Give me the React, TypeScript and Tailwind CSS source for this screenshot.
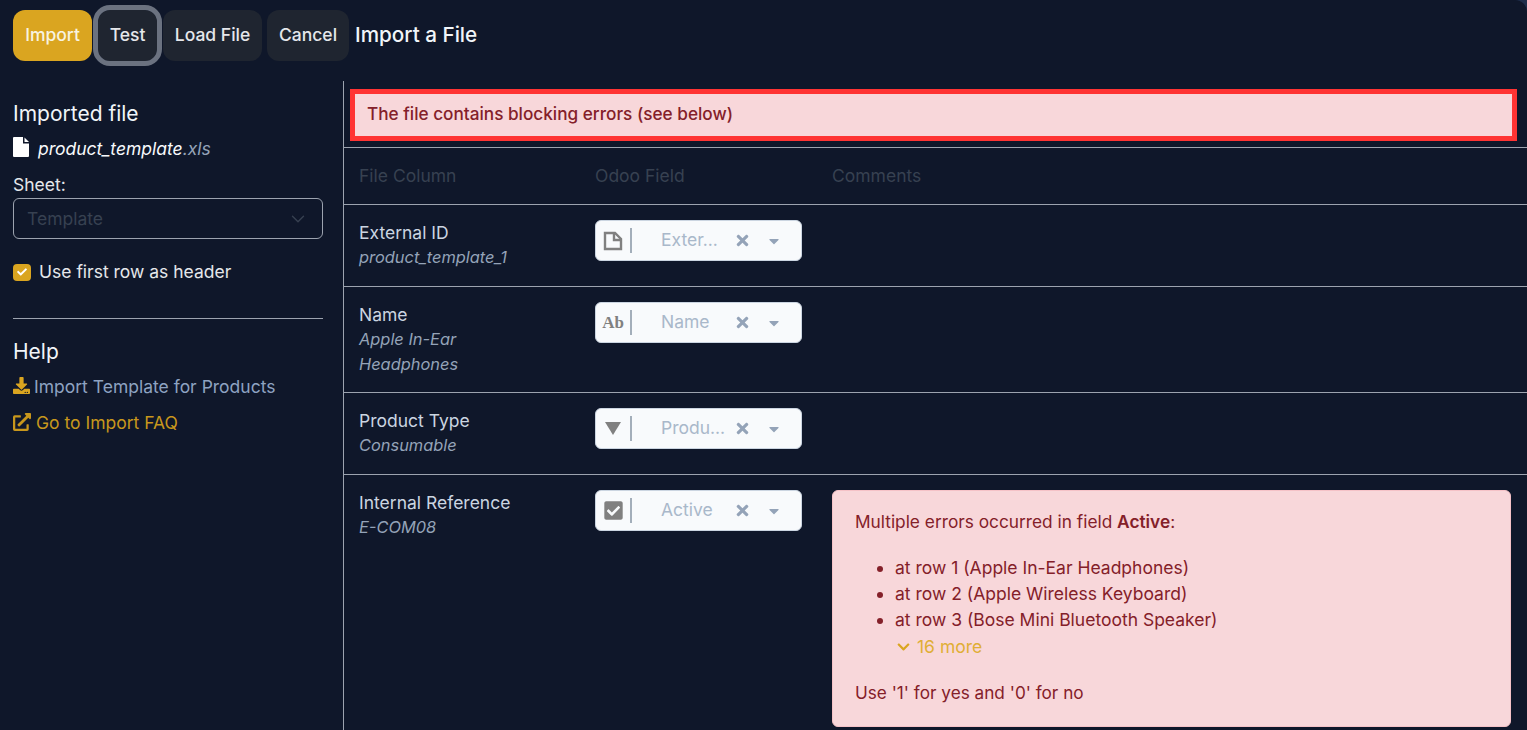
import { FaCaretDown, FaCheck, FaCheckSquare, FaChevronDown, FaDownload, FaExternalLinkAlt, FaTimes } from "react-icons/fa";
import { ChevronDown } from "lucide-react";
import React from "react";

const FileOutlineIcon = () => (
  <svg viewBox="0 0 20 20" className="w-[20px] h-[20px]" fill="none" stroke="#808080" strokeWidth="2.4">
    <path d="M2 2h10l6 6v10H2z" />
    <path d="M11 2v7h7" />
  </svg>
);

const FileSolidIcon = () => (
  <svg viewBox="0 0 16 20" className="w-[16px] h-[20px] -mt-[4px] text-white" fill="currentColor">
    <path d="M1 0h9v6.5h6V19a1 1 0 0 1-1 1H1a1 1 0 0 1-1-1V1a1 1 0 0 1 1-1z" />
    <path d="M11.5 0.5 16 5h-4.5z" />
  </svg>
);

const TriangleIcon = () => (
  <svg viewBox="0 0 16 13" className="w-[16px] h-[13px]" fill="#808080">
    <path d="M0 0h16L8 13z" />
  </svg>
);

const fields = [
  {
    column: "External ID",
    sample: ["product_template_1"],
    value: "Exter...",
    icon: <FileOutlineIcon />,
    rowClass: "h-[82px]",
  },
  {
    column: "Name",
    sample: ["Apple In-Ear", "Headphones"],
    value: "Name",
    icon: <span className="font-['Liberation_Serif',serif] font-bold text-[17px] text-[#808080]">Ab</span>,
    rowClass: "h-[106px]",
  },
  {
    column: "Product Type",
    sample: ["Consumable"],
    value: "Produ...",
    icon: <TriangleIcon />,
    rowClass: "h-[82px]",
  },
];

const FieldSelect = ({ icon, value }: { icon: React.ReactNode; value: string }) => (
  <div className="flex items-center w-[207px] h-[41px] rounded-[6px] bg-[#f8fafc] border border-[#cbd5e1]">
    <div className="w-[36px] h-[25px] flex items-center justify-center border-r-2 border-[#a3aeba] shrink-0">
      {icon}
    </div>
    <span className="ml-[29px] w-[73px] pb-[1px] text-[#a9b8ca] whitespace-nowrap">{value}</span>
    <FaTimes className="w-[17px] h-[17px] text-[#94a3b8]" />
    <FaCaretDown className="w-[16px] h-[16px] text-[#94a3b8] ml-[15px]" />
  </div>
);

const ActionButton = ({ label, className }: { label: string; className: string }) => (
  <button className={`h-[51px] pb-[2px] rounded-[12px] text-[#e5e7eb] font-medium ${className}`}>{label}</button>
);

export default function App() {
  return (
    <div className="h-[730px] overflow-hidden bg-[#1e2d4a] font-['Inter',sans-serif] text-[17.5px] leading-[26px]">
      <div className="h-full bg-[#0f172a] rounded-tr-[12px] flex flex-col">
        {/* Control panel */}
        <div className="h-[81px] shrink-0 flex items-start pt-[10px] pl-[13px]">
          <ActionButton label="Import" className="w-[79px] bg-[#daa520] text-[#f8f3e0]" />
          <ActionButton
            label="Test"
            className="w-[59px] ml-[6px] bg-[#1f2530] outline-[5px] outline-[#6b7280] outline-offset-0"
          />
          <ActionButton label="Load File" className="w-[99px] ml-[6px] bg-[#1f2530]" />
          <ActionButton label="Cancel" className="w-[82px] ml-[5px] bg-[#1f2530]" />
          <h1 className="ml-[6px] h-[51px] pb-[2px] flex items-center text-[20.7px] font-medium text-[#f1f5f9]">
            Import a File
          </h1>
        </div>

        <div className="flex flex-1 min-h-0">
          {/* Sidebar */}
          <aside className="w-[344px] shrink-0 border-r border-[#9ca3af] px-[13px] pr-[20px] pt-[19px]">
            <h2 className="text-[21px] leading-[28px] text-[#f1f5f9]">Imported file</h2>
            <div className="flex items-center mt-[8px] h-[26px]">
              <FileSolidIcon />
              <span className="ml-[9px] italic text-[#f8fafc]">product_template</span>
              <span className="italic text-[#94a3b8]">.xls</span>
            </div>
            <label className="block mt-[10px] text-[#e5e7eb]">Sheet:</label>
            <div className="h-[41px] rounded-[6px] border border-[#9ca3af] flex items-center justify-between pl-[13px] pr-[13px] text-[#374151]">
              <span>Template</span>
              <ChevronDown className="w-[22px] h-[22px] text-[#374151]" strokeWidth={1.5} />
            </div>
            <div className="flex items-center mt-[20px]">
              <span className="w-[18px] h-[17px] rounded-[4px] bg-[#daa520] flex items-center justify-center">
                <FaCheck className="w-[10px] h-[10px] text-white" />
              </span>
              <span className="ml-[8px] text-[#e5e7eb]">Use first row as header</span>
            </div>
            <hr className="mt-[33px] border-[#9ca3af]" />
            <h2 className="mt-[19px] text-[21px] leading-[28px] text-[#f1f5f9]">Help</h2>
            <div className="flex items-center mt-[8px] text-[#8ea3c2]">
              <FaDownload className="w-[17px] h-[17px] text-[#daa520] -mt-[3px]" />
              <span className="ml-[4px]">Import Template for Products</span>
            </div>
            <div className="flex items-center mt-[10px] text-[#c8971c]">
              <FaExternalLinkAlt className="w-[18px] h-[18px] -mt-[3px]" />
              <span className="ml-[5px]">Go to Import FAQ</span>
            </div>
          </aside>

          {/* Mapping table */}
          <main className="flex-1 min-w-0">
            <div className="h-[67px] border-b border-[#9ca3af] pt-[8px] pl-[6px] pr-[10px]">
              <div className="h-[52px] border-[5px] border-[#ff3333] bg-[#f8d7da] flex items-center pl-[12px] pb-[2px] text-[17.2px] text-[#842029] font-medium">
                The file contains blocking errors (see below)
              </div>
            </div>
            <div className="grid grid-cols-[236px_237px_1fr] h-[57px] border-b border-[#9ca3af] items-center text-[#374151]">
              <div className="px-[15px]">File Column</div>
              <div className="px-[15px]">Odoo Field</div>
              <div className="px-[15px]">Comments</div>
            </div>
            {fields.map((field) => (
              <div
                key={field.column}
                className={`grid grid-cols-[236px_237px_1fr] border-b border-[#9ca3af] pt-[15px] ${field.rowClass}`}
              >
                <div className="px-[15px]">
                  <div className="text-[#cbd5e1]">{field.column}</div>
                  <div className="-mt-[1px]">
                    {field.sample.map((line) => (
                      <div key={line} className="italic text-[16.4px] leading-[25px] text-[#94a3b8]">
                        {line}
                      </div>
                    ))}
                  </div>
                </div>
                <div className="px-[15px]">
                  <FieldSelect icon={field.icon} value={field.value} />
                </div>
              </div>
            ))}
            <div className="grid grid-cols-[236px_237px_1fr] pt-[15px]">
              <div className="px-[15px]">
                <div className="text-[#cbd5e1]">Internal Reference</div>
                <div className="-mt-[1px] italic text-[16.4px] leading-[25px] text-[#94a3b8]">E-COM08</div>
              </div>
              <div className="px-[15px]">
                <FieldSelect icon={<FaCheckSquare className="w-[21px] h-[21px] text-[#808080]" />} value="Active" />
              </div>
              <div className="pl-[15px] pr-[16px]">
                <div className="h-[237px] rounded-[6px] bg-[#f8d7da] border border-[#f5c2c7] pl-[22px] pt-[18px] text-[#842029]">
                  <p className="text-[17.3px]">
                    Multiple errors occurred in field <b className="font-semibold">Active</b>:
                  </p>
                  <ul className="list-disc pl-[40px] mt-[20px]">
                    <li>at row 1 (Apple In-Ear Headphones)</li>
                    <li>at row 2 (Apple Wireless Keyboard)</li>
                    <li>at row 3 (Bose Mini Bluetooth Speaker)</li>
                  </ul>
                  <div className="flex items-center pl-[40px] mt-[1px] text-[#e0ae35]">
                    <FaChevronDown className="w-[17px] h-[14px] text-[#daa520]" />
                    <span className="ml-[5px]">16 more</span>
                  </div>
                  <p className="mt-[20px] text-[17.2px]">Use '1' for yes and '0' for no</p>
                </div>
              </div>
            </div>
          </main>
        </div>
      </div>
    </div>
  );
}
